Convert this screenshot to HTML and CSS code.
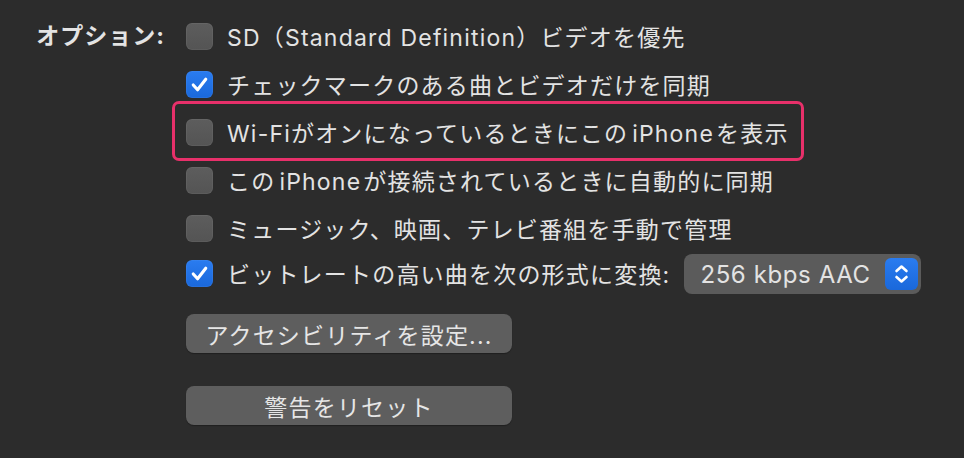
FILE: index.html
```html
<!DOCTYPE html>
<html lang="ja">
<head>
    <meta charset="UTF-8">
    <title>オプション</title>
    <link rel="stylesheet" href="styles.css">
</head>
<body>
    <div class="panel">
        <div class="label">オプション:</div>
        <div class="options">
            <div class="row">
                <span class="box"></span>
                <span class="text">SD（Standard Definition）ビデオを優先</span>
            </div>
            <div class="row">
                <span class="box checked">
                    <svg viewBox="0 0 28 28"><path d="M7.5 14.5 L12 19.5 L20.5 8.5" /></svg>
                </span>
                <span class="text">チェックマークのある曲とビデオだけを同期</span>
            </div>
            <div class="row highlight">
                <span class="box"></span>
                <span class="text">Wi-Fiがオンになっているときにこの<span class="latin">iPhone</span>を表示</span>
            </div>
            <div class="row">
                <span class="box"></span>
                <span class="text">この<span class="latin">iPhone</span>が接続されているときに自動的に同期</span>
            </div>
            <div class="row">
                <span class="box"></span>
                <span class="text">ミュージック、映画、テレビ番組を手動で管理</span>
            </div>
            <div class="row last">
                <span class="box checked">
                    <svg viewBox="0 0 28 28"><path d="M7.5 14.5 L12 19.5 L20.5 8.5" /></svg>
                </span>
                <span class="text">ビットレートの高い曲を次の形式に変換:</span>
                <div class="popup">
                    <span class="popup-value">256 kbps AAC</span>
                    <span class="stepper">
                        <svg viewBox="0 0 32 32"><path d="M11 13 L16 8.5 L21 13 M11 19 L16 23.5 L21 19" /></svg>
                    </span>
                </div>
            </div>
            <button class="btn first">アクセシビリティを設定...</button>
            <button class="btn second">警告をリセット</button>
        </div>
    </div>
</body>
</html>
```

FILE: styles.css
```css
body {
    margin: 0;
    background-color: #2c2c2c;
    color: #e3e3e3;
    font-family: "Inter", "Noto Sans CJK JP", sans-serif;
    font-size: 23px;
    width: 964px;
    height: 458px;
    overflow: hidden;
}

.panel {
    display: flex;
    padding-top: 12px;
}

.label {
    width: 165px;
    text-align: right;
    font-weight: bold;
    height: 48px;
    line-height: 48px;
    letter-spacing: 1px;
}

.options {
    display: flex;
    flex-direction: column;
    align-items: flex-start;
    padding-left: 21px;
}

.row {
    display: flex;
    align-items: center;
    height: 48px;
    position: relative;
}

.row .text {
    margin-left: 14px;
    letter-spacing: 1.2px;
    white-space: nowrap;
}

.latin {
    margin: 0 2px 0 4px;
}

/* pink annotation frame */
.highlight::after {
    content: "";
    position: absolute;
    left: -14px;
    right: -15px;
    top: -7px;
    bottom: -5px;
    border: 3px solid #e8306a;
    border-radius: 7px;
}

.box {
    width: 27px;
    height: 27px;
    border-radius: 6px;
    background: linear-gradient(#5d5d5d, #545454);
    box-shadow: inset 0 0 0 1px rgba(255, 255, 255, 0.05);
    display: flex;
    flex-shrink: 0;
}

.box.checked {
    background: linear-gradient(#2a7cf0, #1a68db);
}

.box svg {
    width: 27px;
    height: 27px;
}

.box path {
    fill: none;
    stroke: #ffffff;
    stroke-width: 3.2;
    stroke-linecap: round;
    stroke-linejoin: round;
}

.row.last {
    height: 42px;
}

.popup {
    margin-left: 14px;
    width: 237px;
    height: 40px;
    box-sizing: border-box;
    background-color: #5b5b5b;
    border-radius: 8px;
    display: flex;
    align-items: center;
    justify-content: space-between;
    padding: 0 3px 0 16px;
    margin-top: 2px;
}

.popup-value {
    font-size: 24px;
    letter-spacing: 0.6px;
}

.stepper {
    width: 33px;
    height: 32px;
    border-radius: 6px;
    background: linear-gradient(#2a7cf0, #1a68db);
    display: flex;
}

.stepper svg {
    width: 33px;
    height: 32px;
}

.stepper path {
    fill: none;
    stroke: #ffffff;
    stroke-width: 2.6;
    stroke-linecap: round;
    stroke-linejoin: round;
}

.btn {
    width: 326px;
    height: 39px;
    border: none;
    border-radius: 8px;
    background-color: #5e5e5e;
    color: #e6e6e6;
    font-family: inherit;
    font-size: 23px;
    letter-spacing: 1.2px;
    padding: 0;
    box-shadow: 0 1px 1px rgba(0, 0, 0, 0.3);
}

.btn.first {
    margin-top: 20px;
}

.btn.second {
    margin-top: 33px;
}
```
